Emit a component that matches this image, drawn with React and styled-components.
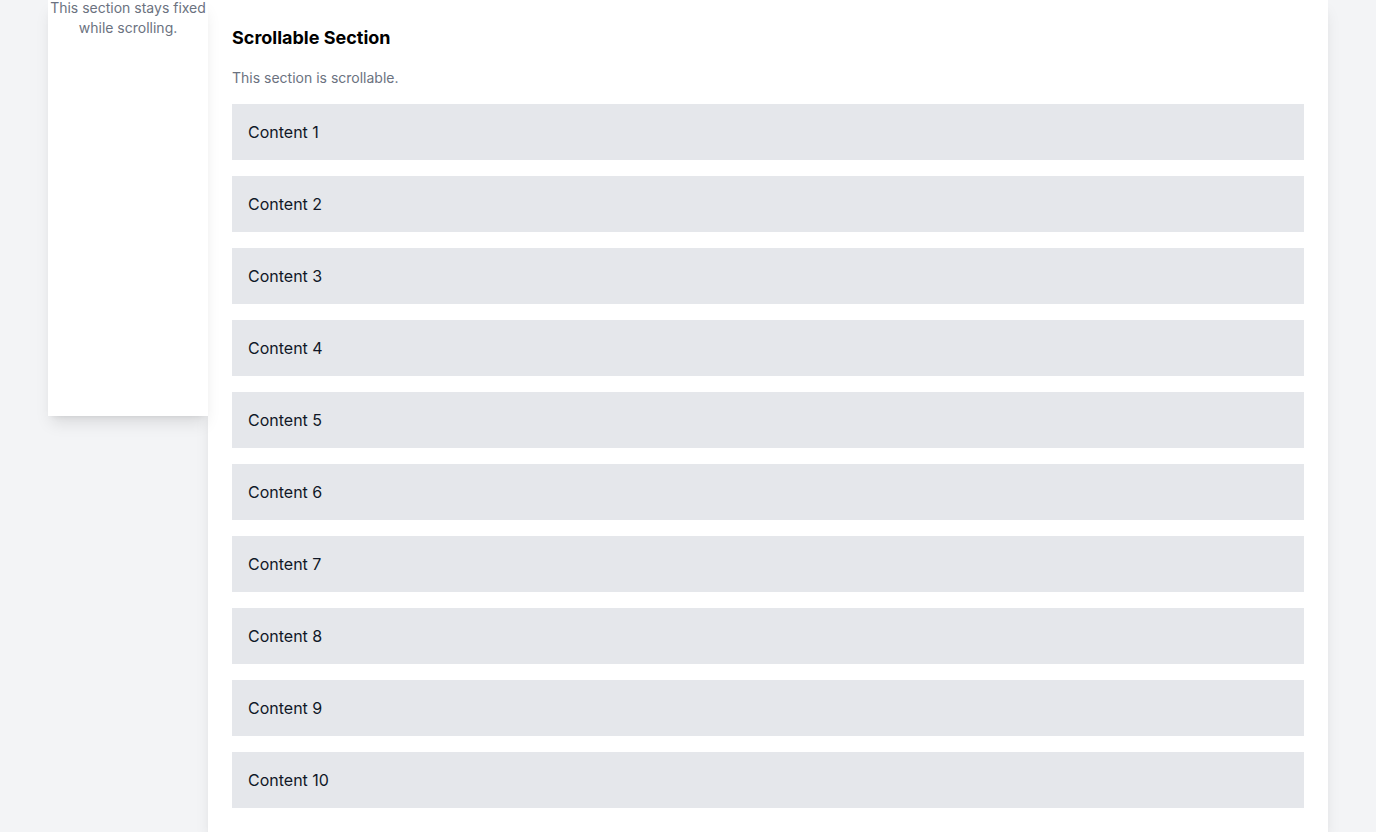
import React from "react";
import styled, { createGlobalStyle } from "styled-components";

const GlobalStyle = createGlobalStyle`
  body {
    margin: 0;
    background: #f3f4f6;
    font-family: Inter, "Noto Sans", sans-serif;
    color: #111827;
  }
`;

const Page = styled.div`
  display: flex;
  align-items: flex-start;
  padding: 0 48px;
`;

const Sidebar = styled.aside`
  width: 160px;
  height: 416px;
  flex-shrink: 0;
  background: #ffffff;
  box-shadow: 0 10px 15px -3px rgba(0, 0, 0, 0.1), 0 4px 6px -4px rgba(0, 0, 0, 0.1);
  text-align: center;
  position: relative;
  z-index: 1;
`;

const SideText = styled.p`
  margin: -2px 0 0;
  font-size: 14px;
  line-height: 20px;
  color: #6b7280;
`;

const Main = styled.main`
  flex: 1;
  width: 1120px;
  box-sizing: border-box;
  padding: 24px;
  background: #ffffff;
  box-shadow: 0 10px 15px -3px rgba(0, 0, 0, 0.1), 0 4px 6px -4px rgba(0, 0, 0, 0.1);
`;

const Title = styled.h2`
  margin: 0 0 16px;
  font-size: 18px;
  line-height: 28px;
  font-weight: 700;
  color: #000000;
`;

const Subtitle = styled.p`
  margin: 0 0 16px;
  font-size: 14px;
  line-height: 20px;
  color: #6b7280;
`;

const List = styled.div`
  display: flex;
  flex-direction: column;
  gap: 16px;
`;

const Item = styled.div`
  background: #e5e7eb;
  padding: 16px;
  font-size: 16px;
  line-height: 24px;
  color: #111827;
`;

export default function App() {
  const items = Array.from({ length: 10 }, (_, i) => i + 1);
  return (
    <>
      <GlobalStyle />
      <Page>
        <Sidebar>
          <SideText>
            This section stays fixed
            <br />
            while scrolling.
          </SideText>
        </Sidebar>
        <Main>
          <Title>Scrollable Section</Title>
          <Subtitle>This section is scrollable.</Subtitle>
          <List>
            {items.map((n) => (
              <Item key={n}>Content {n}</Item>
            ))}
          </List>
        </Main>
      </Page>
    </>
  );
}
